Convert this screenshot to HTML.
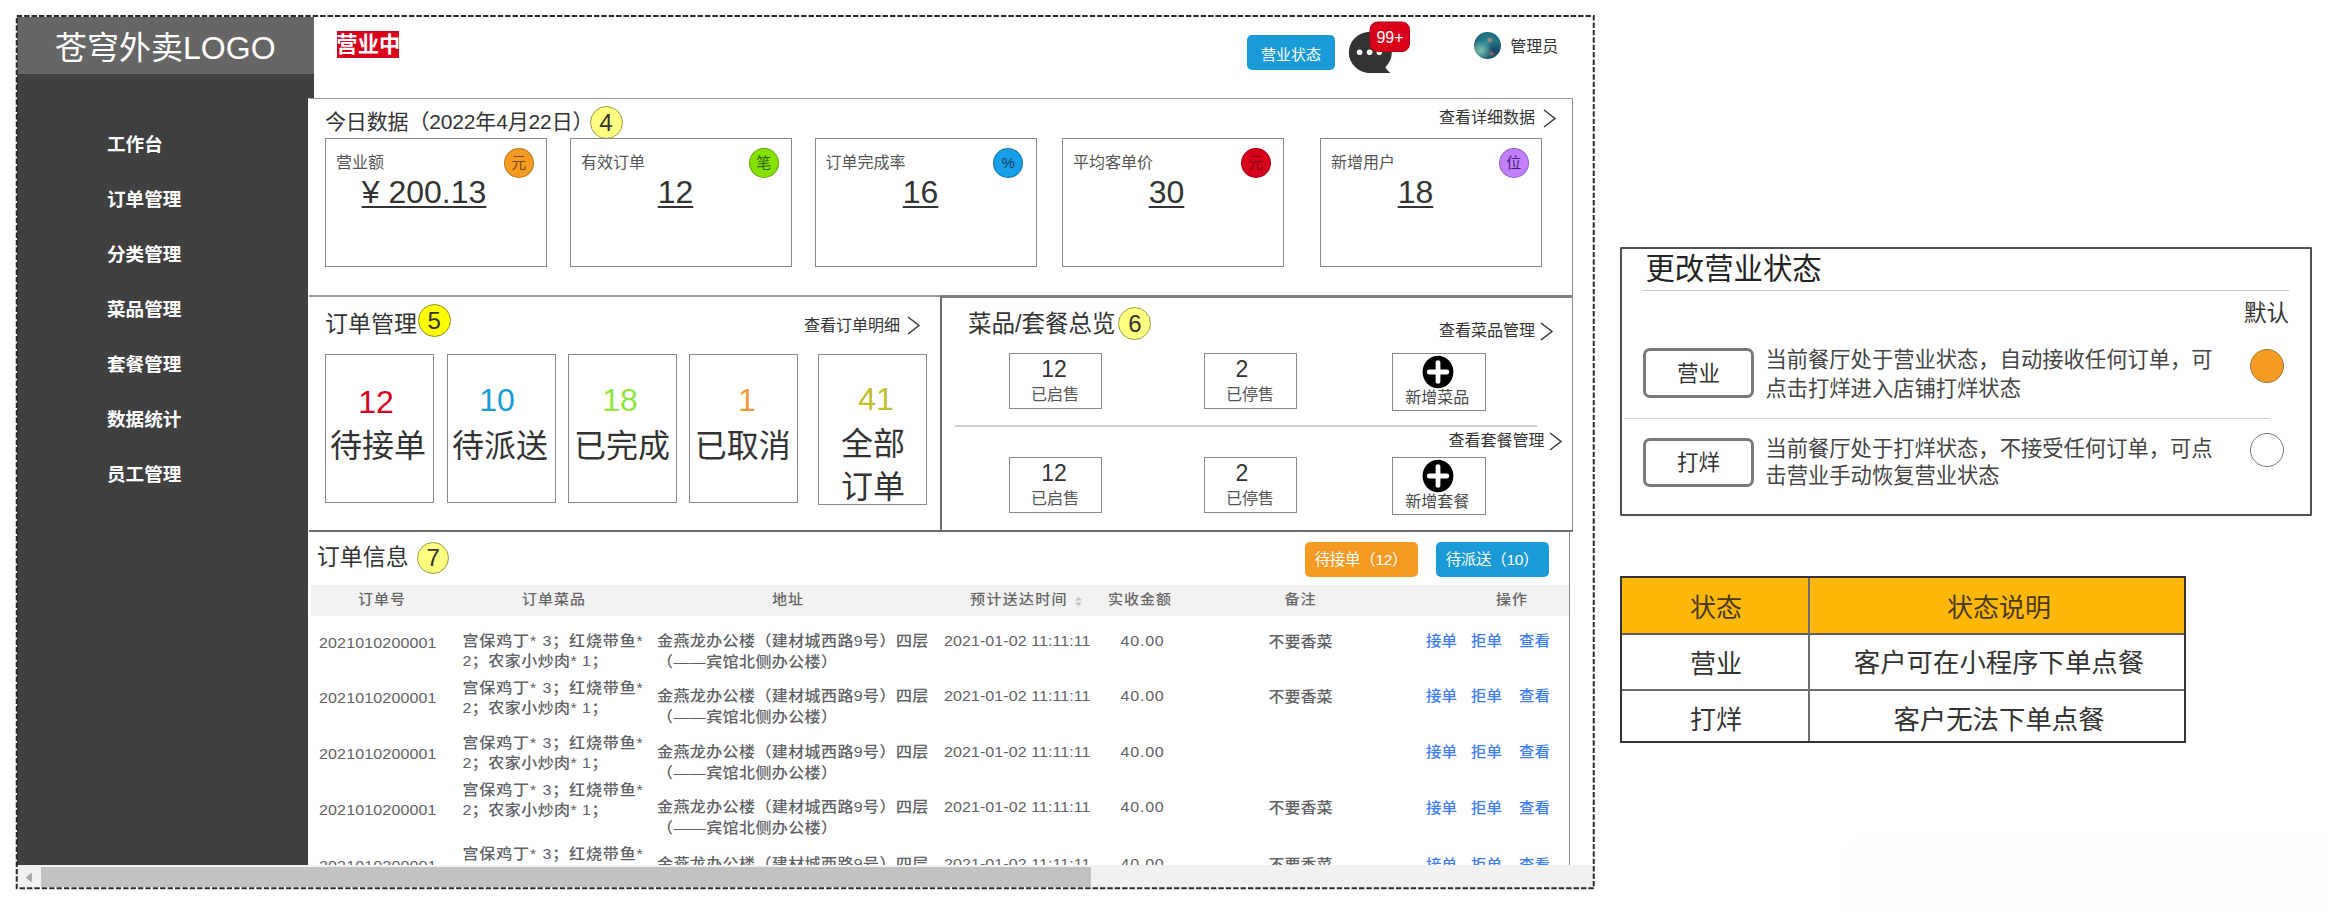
<!DOCTYPE html>
<html lang="zh-CN"><head><meta charset="utf-8"><title>苍穹外卖 工作台</title>
<style>
html,body{margin:0;padding:0;background:#fff}
body{width:2328px;height:912px;position:relative;overflow:hidden;
font-family:"Liberation Sans","Noto Sans CJK SC",sans-serif;color:#333}
body div,body svg{position:absolute;white-space:nowrap}
body div>span{position:static}
.tb div{transform:scaleY(.94)}
</style></head><body>
<div style="left:17px;top:17px;width:297px;height:57.2px;background:#666"></div>
<div style="left:-34.69999999999999px;top:26.299999999999997px;width:400px;text-align:center;font-size:32px;line-height:44px;color:#fff;font-weight:400;">苍穹外卖LOGO</div>
<div style="left:17px;top:74.1px;width:297px;height:790.6px;background:#404040"></div>
<div style="left:308px;top:98.3px;width:1265px;height:768px;background:#fff"></div>
<div style="left:107px;top:132.2px;font-size:18.6px;line-height:26px;color:#fff;font-weight:700;">工作台</div>
<div style="left:107px;top:187.2px;font-size:18.6px;line-height:26px;color:#fff;font-weight:700;">订单管理</div>
<div style="left:107px;top:242.2px;font-size:18.6px;line-height:26px;color:#fff;font-weight:700;">分类管理</div>
<div style="left:107px;top:297.2px;font-size:18.6px;line-height:26px;color:#fff;font-weight:700;">菜品管理</div>
<div style="left:107px;top:352.2px;font-size:18.6px;line-height:26px;color:#fff;font-weight:700;">套餐管理</div>
<div style="left:107px;top:407.2px;font-size:18.6px;line-height:26px;color:#fff;font-weight:700;">数据统计</div>
<div style="left:107px;top:462.2px;font-size:18.6px;line-height:26px;color:#fff;font-weight:700;">员工管理</div>
<div style="left:337px;top:31px;width:62px;height:27px;background:#d9001b"></div>
<div style="left:328.3px;top:32.1px;width:80px;text-align:center;font-size:21.3px;line-height:27px;color:#fff;font-weight:700;">营业中</div>
<div style="left:1246.7px;top:34.5px;width:88.6px;height:35.7px;background:#1a9bd7;border-radius:5px"></div>
<div style="left:1241.0px;top:43.5px;width:100px;text-align:center;font-size:15px;line-height:21px;color:#fff;font-weight:400;">营业状态</div>
<svg style="left:1340px;top:20px" width="80" height="60" viewBox="1340 20 80 60"><ellipse cx="1370.3" cy="52.4" rx="21.5" ry="20.7" fill="#333"/><path d="M1383 62 Q1385 69 1390.5 73 L1368 73.1 Z" fill="#333"/><circle cx="1359.6" cy="52.2" r="2.8" fill="#fff"/><circle cx="1369.6" cy="52.2" r="2.8" fill="#fff"/><circle cx="1379.3" cy="52.2" r="2.8" fill="#fff"/><rect x="1370" y="22" width="39.5" height="29.5" rx="7.5" fill="#d9001b" stroke="#b80018" stroke-width="1"/></svg>
<div style="left:1360.0px;top:26.700000000000003px;width:60px;text-align:center;font-size:16px;line-height:22px;color:#fff;font-weight:400;">99+</div>
<div style="left:1474.4px;top:32.2px;width:26.8px;height:26.8px;border-radius:50%;background:radial-gradient(circle at 58% 30%, #d9866f 0, rgba(217,134,111,0) 14%),radial-gradient(circle at 66% 80%, #c46a5a 0, rgba(196,106,90,0) 10%),radial-gradient(ellipse 45% 38% at 24% 68%, #7dbfae 0, rgba(125,191,174,0) 100%),radial-gradient(ellipse 40% 34% at 70% 70%, #163f63 0, rgba(22,63,99,0) 100%),radial-gradient(circle at 50% 40%, #2b8793 0, #1a6476 70%, #174f66 100%)"></div>
<div style="left:1510.3px;top:36.2px;font-size:16px;line-height:22px;color:#333;font-weight:400;">管理员</div>
<div style="left:309px;top:98px;width:1264px;height:198px;border:1px solid #969696;box-sizing:border-box;border-bottom:none;border-left:none"></div>
<div style="left:325px;top:106.7px;font-size:21px;line-height:29px;color:#333;font-weight:400;letter-spacing:-0.15px">今日数据（2022年4月22日）</div>
<div style="left:589.5px;top:106.1px;width:33.0px;height:33.0px;border-radius:50%;background:#ffff80;border:1px solid #9c9c4a;box-sizing:border-box;text-align:center;line-height:31.0px;font-size:24px;color:#333;">4</div>
<div style="left:1135px;top:107.0px;width:400px;text-align:right;font-size:16px;line-height:22px;color:#333;font-weight:400;">查看详细数据</div>
<svg style="left:1543px;top:108.5px" width="14" height="19" viewBox="0 0 14 19"><path d="M1 1 L12 9.5 L1 18" fill="none" stroke="#333" stroke-width="1.4"/></svg>
<div style="left:325px;top:138px;width:222px;height:128.7px;border:1px solid #8a8a8a;box-sizing:border-box"></div>
<div style="left:336px;top:152.0px;font-size:16px;line-height:22px;color:#555;font-weight:400;">营业额</div>
<div style="left:503.70000000000005px;top:148px;width:30px;height:30px;border-radius:50%;background:#f59a23;border:1px solid rgba(0,0,0,.25);box-sizing:border-box;text-align:center;line-height:28px;font-size:15px;color:#7a4a10;">元</div>
<div style="left:304.0px;top:175.0px;width:240px;text-align:center;font-size:32px;line-height:34px;color:#333;font-weight:400;"><span style="text-decoration:underline;text-decoration-thickness:2.4px;text-underline-offset:3.2px;text-decoration-skip-ink:none">¥ 200.13</span></div>
<div style="left:570px;top:138px;width:222px;height:128.7px;border:1px solid #8a8a8a;box-sizing:border-box"></div>
<div style="left:581px;top:152.0px;font-size:16px;line-height:22px;color:#555;font-weight:400;">有效订单</div>
<div style="left:748.7px;top:148px;width:30px;height:30px;border-radius:50%;background:#86e000;border:1px solid rgba(0,0,0,.25);box-sizing:border-box;text-align:center;line-height:28px;font-size:15px;color:#2f6a00;">笔</div>
<div style="left:555.5px;top:175.0px;width:240px;text-align:center;font-size:32px;line-height:34px;color:#333;font-weight:400;"><span style="text-decoration:underline;text-decoration-thickness:2.4px;text-underline-offset:3.2px;text-decoration-skip-ink:none">12</span></div>
<div style="left:814.5px;top:138px;width:222px;height:128.7px;border:1px solid #8a8a8a;box-sizing:border-box"></div>
<div style="left:825.5px;top:152.0px;font-size:16px;line-height:22px;color:#555;font-weight:400;">订单完成率</div>
<div style="left:993.2px;top:148px;width:30px;height:30px;border-radius:50%;background:#179ee6;border:1px solid rgba(0,0,0,.25);box-sizing:border-box;text-align:center;line-height:28px;font-size:15px;color:#0b3f66;">%</div>
<div style="left:800.5px;top:175.0px;width:240px;text-align:center;font-size:32px;line-height:34px;color:#333;font-weight:400;"><span style="text-decoration:underline;text-decoration-thickness:2.4px;text-underline-offset:3.2px;text-decoration-skip-ink:none">16</span></div>
<div style="left:1062px;top:138px;width:222px;height:128.7px;border:1px solid #8a8a8a;box-sizing:border-box"></div>
<div style="left:1073px;top:152.0px;font-size:16px;line-height:22px;color:#555;font-weight:400;">平均客单价</div>
<div style="left:1240.7px;top:148px;width:30px;height:30px;border-radius:50%;background:#d9001b;border:1px solid rgba(0,0,0,.25);box-sizing:border-box;text-align:center;line-height:28px;font-size:15px;color:#7a0010;">元</div>
<div style="left:1046.5px;top:175.0px;width:240px;text-align:center;font-size:32px;line-height:34px;color:#333;font-weight:400;"><span style="text-decoration:underline;text-decoration-thickness:2.4px;text-underline-offset:3.2px;text-decoration-skip-ink:none">30</span></div>
<div style="left:1320px;top:138px;width:222px;height:128.7px;border:1px solid #8a8a8a;box-sizing:border-box"></div>
<div style="left:1331px;top:152.0px;font-size:16px;line-height:22px;color:#555;font-weight:400;">新增用户</div>
<div style="left:1498.7px;top:148px;width:30px;height:30px;border-radius:50%;background:#c280ff;border:1px solid rgba(0,0,0,.25);box-sizing:border-box;text-align:center;line-height:28px;font-size:15px;color:#4b1f7a;">位</div>
<div style="left:1295.5px;top:175.0px;width:240px;text-align:center;font-size:32px;line-height:34px;color:#333;font-weight:400;"><span style="text-decoration:underline;text-decoration-thickness:2.4px;text-underline-offset:3.2px;text-decoration-skip-ink:none">18</span></div>
<div style="left:309px;top:295px;width:632px;height:1.5px;background:#9a9a9a"></div>
<div style="left:940px;top:295px;width:633px;height:2.6px;background:#808080"></div>
<div style="left:939.5px;top:296px;width:2.5px;height:235px;background:#6e6e6e"></div>
<div style="left:309px;top:529.5px;width:1264px;height:2px;background:#6e6e6e"></div>
<div style="left:1572px;top:99px;width:1px;height:432px;background:#8a8a8a"></div>
<div style="left:325px;top:308.0px;font-size:23px;line-height:32px;color:#333;font-weight:400;">订单管理</div>
<div style="left:417.6px;top:303.8px;width:33.0px;height:33.0px;border-radius:50%;background:#ffff00;border:1px solid #8a8a2a;box-sizing:border-box;text-align:center;line-height:31.0px;font-size:24px;color:#333;">5</div>
<div style="left:500px;top:314.5px;width:400px;text-align:right;font-size:16px;line-height:22px;color:#333;font-weight:400;">查看订单明细</div>
<svg style="left:907px;top:316.0px" width="14" height="19" viewBox="0 0 14 19"><path d="M1 1 L12 9.5 L1 18" fill="none" stroke="#333" stroke-width="1.4"/></svg>
<div style="left:325px;top:354px;width:109px;height:149px;border:1px solid #8a8a8a;box-sizing:border-box"></div>
<div style="left:326.0px;top:385.0px;width:100px;text-align:center;font-size:32px;line-height:34px;color:#d9001b;font-weight:400;">12</div>
<div style="left:318.0px;top:426.0px;width:120px;text-align:center;font-size:32px;line-height:40px;color:#333;font-weight:400;">待接单</div>
<div style="left:447px;top:354px;width:109px;height:149px;border:1px solid #8a8a8a;box-sizing:border-box"></div>
<div style="left:447.0px;top:383.0px;width:100px;text-align:center;font-size:32px;line-height:34px;color:#1a9bd7;font-weight:400;">10</div>
<div style="left:440.0px;top:426.0px;width:120px;text-align:center;font-size:32px;line-height:40px;color:#333;font-weight:400;">待派送</div>
<div style="left:567.5px;top:354px;width:109px;height:149px;border:1px solid #8a8a8a;box-sizing:border-box"></div>
<div style="left:570.0px;top:383.0px;width:100px;text-align:center;font-size:32px;line-height:34px;color:#8fe63c;font-weight:400;">18</div>
<div style="left:562.0px;top:426.0px;width:120px;text-align:center;font-size:32px;line-height:40px;color:#333;font-weight:400;">已完成</div>
<div style="left:688.5px;top:354px;width:109px;height:149px;border:1px solid #8a8a8a;box-sizing:border-box"></div>
<div style="left:697.0px;top:383.0px;width:100px;text-align:center;font-size:32px;line-height:34px;color:#f59a3c;font-weight:400;">1</div>
<div style="left:682.8px;top:426.0px;width:120px;text-align:center;font-size:32px;line-height:40px;color:#333;font-weight:400;">已取消</div>
<div style="left:818px;top:354px;width:109px;height:151px;border:1px solid #8a8a8a;box-sizing:border-box"></div>
<div style="left:826.0px;top:382.0px;width:100px;text-align:center;font-size:32px;line-height:34px;color:#bfbf30;font-weight:400;">41</div>
<div style="left:818.5px;top:424.0px;width:109px;text-align:center;font-size:32px;line-height:40px;color:#333;font-weight:400;">全部</div>
<div style="left:818.5px;top:467.0px;width:109px;text-align:center;font-size:32px;line-height:40px;color:#333;font-weight:400;">订单</div>
<div style="left:968px;top:307.5px;font-size:23.5px;line-height:33px;color:#333;font-weight:400;">菜品/套餐总览</div>
<div style="left:1118.4px;top:306.7px;width:33.0px;height:33.0px;border-radius:50%;background:#ffff80;border:1px solid #9c9c4a;box-sizing:border-box;text-align:center;line-height:31.0px;font-size:24px;color:#333;">6</div>
<div style="left:1135px;top:319.5px;width:400px;text-align:right;font-size:16px;line-height:22px;color:#333;font-weight:400;">查看菜品管理</div>
<svg style="left:1540px;top:321.5px" width="14" height="19" viewBox="0 0 14 19"><path d="M1 1 L12 9.5 L1 18" fill="none" stroke="#333" stroke-width="1.4"/></svg>
<div style="left:955px;top:425.2px;width:582px;height:2px;background:#cfcfcf"></div>
<div style="left:1144.5px;top:430.0px;width:400px;text-align:right;font-size:16px;line-height:22px;color:#333;font-weight:400;">查看套餐管理</div>
<svg style="left:1549px;top:431.5px" width="14" height="19" viewBox="0 0 14 19"><path d="M1 1 L12 9.5 L1 18" fill="none" stroke="#333" stroke-width="1.4"/></svg>
<div style="left:1009px;top:353px;width:93px;height:55.5px;border:1px solid #8a8a8a;box-sizing:border-box"></div>
<div style="left:1014.0px;top:352.5px;width:80px;text-align:center;font-size:23px;line-height:32px;color:#333;font-weight:400;">12</div>
<div style="left:1010.0px;top:383.7px;width:90px;text-align:center;font-size:16px;line-height:22px;color:#555;font-weight:400;">已启售</div>
<div style="left:1204px;top:353px;width:93px;height:55.5px;border:1px solid #8a8a8a;box-sizing:border-box"></div>
<div style="left:1202.0px;top:352.5px;width:80px;text-align:center;font-size:23px;line-height:32px;color:#333;font-weight:400;">2</div>
<div style="left:1205.0px;top:383.7px;width:90px;text-align:center;font-size:16px;line-height:22px;color:#555;font-weight:400;">已停售</div>
<div style="left:1392px;top:353px;width:94px;height:58px;border:1px solid #8a8a8a;box-sizing:border-box"></div>
<svg style="left:1420.5px;top:355px" width="34" height="34" viewBox="0 0 34 34"><ellipse cx="17" cy="17" rx="15.4" ry="16.2" fill="#000"/><path d="M17 7.6V26.4M8.2 17H25.8" stroke="#fff" stroke-width="4.8" stroke-linecap="round"/></svg>
<div style="left:1390.2px;top:387.3px;width:94px;text-align:center;font-size:16px;line-height:22px;color:#4a4a4a;font-weight:400;">新增菜品</div>
<div style="left:1009px;top:457px;width:93px;height:55.5px;border:1px solid #8a8a8a;box-sizing:border-box"></div>
<div style="left:1014.0px;top:456.5px;width:80px;text-align:center;font-size:23px;line-height:32px;color:#333;font-weight:400;">12</div>
<div style="left:1010.0px;top:487.7px;width:90px;text-align:center;font-size:16px;line-height:22px;color:#555;font-weight:400;">已启售</div>
<div style="left:1204px;top:457px;width:93px;height:55.5px;border:1px solid #8a8a8a;box-sizing:border-box"></div>
<div style="left:1202.0px;top:456.5px;width:80px;text-align:center;font-size:23px;line-height:32px;color:#333;font-weight:400;">2</div>
<div style="left:1205.0px;top:487.7px;width:90px;text-align:center;font-size:16px;line-height:22px;color:#555;font-weight:400;">已停售</div>
<div style="left:1392px;top:457px;width:94px;height:58px;border:1px solid #8a8a8a;box-sizing:border-box"></div>
<svg style="left:1420.5px;top:459px" width="34" height="34" viewBox="0 0 34 34"><ellipse cx="17" cy="17" rx="15.4" ry="16.2" fill="#000"/><path d="M17 7.6V26.4M8.2 17H25.8" stroke="#fff" stroke-width="4.8" stroke-linecap="round"/></svg>
<div style="left:1390.2px;top:491.3px;width:94px;text-align:center;font-size:16px;line-height:22px;color:#4a4a4a;font-weight:400;">新增套餐</div>
<div style="left:1569px;top:531px;width:1px;height:334px;background:#8a8a8a"></div>
<div style="left:316.8px;top:541.3px;font-size:23px;line-height:32px;color:#333;font-weight:400;">订单信息</div>
<div style="left:416.9px;top:541.8000000000001px;width:32.6px;height:32.6px;border-radius:50%;background:#ffff80;border:1px solid #9c9c4a;box-sizing:border-box;text-align:center;line-height:30.6px;font-size:24px;color:#333;">7</div>
<div style="left:1305px;top:542px;width:113px;height:34.5px;background:#f59a23;border-radius:5px"></div>
<div style="left:1296.0px;top:548.5px;width:130px;text-align:center;font-size:15.5px;line-height:22px;color:#fff;font-weight:400;letter-spacing:-0.3px">待接单（12）</div>
<div style="left:1436px;top:542px;width:113px;height:34.5px;background:#1a9bd7;border-radius:5px"></div>
<div style="left:1427.0px;top:548.5px;width:130px;text-align:center;font-size:15.5px;line-height:22px;color:#fff;font-weight:400;letter-spacing:-0.3px">待派送（10）</div>
<div style="left:311px;top:585px;width:1258px;height:31px;background:#f2f2f2"></div>
<div style="left:302.0px;top:588.1px;width:160px;text-align:center;font-size:15px;line-height:21px;color:#666;font-weight:500;letter-spacing:1px;transform:scaleY(.92)">订单号</div>
<div style="left:474.0px;top:588.1px;width:160px;text-align:center;font-size:15px;line-height:21px;color:#666;font-weight:500;letter-spacing:1px;transform:scaleY(.92)">订单菜品</div>
<div style="left:708.0px;top:588.1px;width:160px;text-align:center;font-size:15px;line-height:21px;color:#666;font-weight:500;letter-spacing:1px;transform:scaleY(.92)">地址</div>
<div style="left:1060.0px;top:588.1px;width:160px;text-align:center;font-size:15px;line-height:21px;color:#666;font-weight:500;letter-spacing:1px;transform:scaleY(.92)">实收金额</div>
<div style="left:1220.5px;top:588.1px;width:160px;text-align:center;font-size:15px;line-height:21px;color:#666;font-weight:500;letter-spacing:1px;transform:scaleY(.92)">备注</div>
<div style="left:1432.0px;top:588.1px;width:160px;text-align:center;font-size:15px;line-height:21px;color:#666;font-weight:500;letter-spacing:1px;transform:scaleY(.92)">操作</div>
<div style="left:939.0px;top:588.1px;width:160px;text-align:center;font-size:15px;line-height:21px;color:#666;font-weight:500;letter-spacing:1.3px;transform:scaleY(.92)">预计送达时间</div>
<svg style="left:1074px;top:595.5px" width="9" height="11" viewBox="0 0 9 11"><path d="M4.5 0.8 L8 4.6 H1Z M4.5 10.2 L8 6.4 H1Z" fill="#c0c4cc"/></svg>
<div class="tb" style="left:309px;top:616px;width:1260px;height:249.2px;overflow:hidden">
<div style="left:10px;top:16.0px;font-size:16px;line-height:22px;color:#606266;font-weight:500;letter-spacing:0.15px">2021010200001</div>
<div style="left:153.5px;top:13.899999999999977px;font-size:16px;line-height:22px;color:#606266;font-weight:500;letter-spacing:0.87px">宫保鸡丁* 3；红烧带鱼*</div>
<div style="left:153.5px;top:33.89999999999998px;font-size:16px;line-height:22px;color:#606266;font-weight:500;letter-spacing:0.45px">2；农家小炒肉* 1；</div>
<div style="left:348px;top:14.0px;font-size:16px;line-height:22px;color:#606266;font-weight:500;letter-spacing:0.4px">金燕龙办公楼（建材城西路9号）四层</div>
<div style="left:348px;top:34.5px;font-size:16px;line-height:22px;color:#606266;font-weight:500;letter-spacing:0.4px">（——宾馆北侧办公楼）</div>
<div style="left:635px;top:14.0px;font-size:16px;line-height:22px;color:#606266;font-weight:500;letter-spacing:0.08px">2021-01-02 11:11:11</div>
<div style="left:811.5px;top:14.0px;font-size:16px;line-height:22px;color:#606266;font-weight:500;letter-spacing:0.8px">40.00</div>
<div style="left:931.5px;top:14.5px;width:120px;text-align:center;font-size:16px;line-height:22px;color:#606266;font-weight:500;">不要香菜</div>
<div style="left:1117px;top:14.3px;font-size:15.5px;line-height:22px;color:#3d7efa;font-weight:500;">接单</div>
<div style="left:1162px;top:14.3px;font-size:15.5px;line-height:22px;color:#3d7efa;font-weight:500;">拒单</div>
<div style="left:1210px;top:14.3px;font-size:15.5px;line-height:22px;color:#3d7efa;font-weight:500;">查看</div>
<div style="left:10px;top:71.0px;font-size:16px;line-height:22px;color:#606266;font-weight:500;letter-spacing:0.15px">2021010200001</div>
<div style="left:153.5px;top:60.89999999999998px;font-size:16px;line-height:22px;color:#606266;font-weight:500;letter-spacing:0.87px">宫保鸡丁* 3；红烧带鱼*</div>
<div style="left:153.5px;top:80.89999999999998px;font-size:16px;line-height:22px;color:#606266;font-weight:500;letter-spacing:0.45px">2；农家小炒肉* 1；</div>
<div style="left:348px;top:69.0px;font-size:16px;line-height:22px;color:#606266;font-weight:500;letter-spacing:0.4px">金燕龙办公楼（建材城西路9号）四层</div>
<div style="left:348px;top:89.5px;font-size:16px;line-height:22px;color:#606266;font-weight:500;letter-spacing:0.4px">（——宾馆北侧办公楼）</div>
<div style="left:635px;top:69.0px;font-size:16px;line-height:22px;color:#606266;font-weight:500;letter-spacing:0.08px">2021-01-02 11:11:11</div>
<div style="left:811.5px;top:69.0px;font-size:16px;line-height:22px;color:#606266;font-weight:500;letter-spacing:0.8px">40.00</div>
<div style="left:931.5px;top:69.5px;width:120px;text-align:center;font-size:16px;line-height:22px;color:#606266;font-weight:500;">不要香菜</div>
<div style="left:1117px;top:69.3px;font-size:15.5px;line-height:22px;color:#3d7efa;font-weight:500;">接单</div>
<div style="left:1162px;top:69.3px;font-size:15.5px;line-height:22px;color:#3d7efa;font-weight:500;">拒单</div>
<div style="left:1210px;top:69.3px;font-size:15.5px;line-height:22px;color:#3d7efa;font-weight:500;">查看</div>
<div style="left:10px;top:127.0px;font-size:16px;line-height:22px;color:#606266;font-weight:500;letter-spacing:0.15px">2021010200001</div>
<div style="left:153.5px;top:116.39999999999998px;font-size:16px;line-height:22px;color:#606266;font-weight:500;letter-spacing:0.87px">宫保鸡丁* 3；红烧带鱼*</div>
<div style="left:153.5px;top:136.39999999999998px;font-size:16px;line-height:22px;color:#606266;font-weight:500;letter-spacing:0.45px">2；农家小炒肉* 1；</div>
<div style="left:348px;top:125.0px;font-size:16px;line-height:22px;color:#606266;font-weight:500;letter-spacing:0.4px">金燕龙办公楼（建材城西路9号）四层</div>
<div style="left:348px;top:145.5px;font-size:16px;line-height:22px;color:#606266;font-weight:500;letter-spacing:0.4px">（——宾馆北侧办公楼）</div>
<div style="left:635px;top:125.0px;font-size:16px;line-height:22px;color:#606266;font-weight:500;letter-spacing:0.08px">2021-01-02 11:11:11</div>
<div style="left:811.5px;top:125.0px;font-size:16px;line-height:22px;color:#606266;font-weight:500;letter-spacing:0.8px">40.00</div>
<div style="left:1117px;top:125.30000000000001px;font-size:15.5px;line-height:22px;color:#3d7efa;font-weight:500;">接单</div>
<div style="left:1162px;top:125.30000000000001px;font-size:15.5px;line-height:22px;color:#3d7efa;font-weight:500;">拒单</div>
<div style="left:1210px;top:125.30000000000001px;font-size:15.5px;line-height:22px;color:#3d7efa;font-weight:500;">查看</div>
<div style="left:10px;top:183.0px;font-size:16px;line-height:22px;color:#606266;font-weight:500;letter-spacing:0.15px">2021010200001</div>
<div style="left:153.5px;top:162.89999999999998px;font-size:16px;line-height:22px;color:#606266;font-weight:500;letter-spacing:0.87px">宫保鸡丁* 3；红烧带鱼*</div>
<div style="left:153.5px;top:182.89999999999998px;font-size:16px;line-height:22px;color:#606266;font-weight:500;letter-spacing:0.45px">2；农家小炒肉* 1；</div>
<div style="left:348px;top:180.29999999999995px;font-size:16px;line-height:22px;color:#606266;font-weight:500;letter-spacing:0.4px">金燕龙办公楼（建材城西路9号）四层</div>
<div style="left:348px;top:200.79999999999995px;font-size:16px;line-height:22px;color:#606266;font-weight:500;letter-spacing:0.4px">（——宾馆北侧办公楼）</div>
<div style="left:635px;top:180.29999999999995px;font-size:16px;line-height:22px;color:#606266;font-weight:500;letter-spacing:0.08px">2021-01-02 11:11:11</div>
<div style="left:811.5px;top:180.29999999999995px;font-size:16px;line-height:22px;color:#606266;font-weight:500;letter-spacing:0.8px">40.00</div>
<div style="left:931.5px;top:180.79999999999995px;width:120px;text-align:center;font-size:16px;line-height:22px;color:#606266;font-weight:500;">不要香菜</div>
<div style="left:1117px;top:180.59999999999997px;font-size:15.5px;line-height:22px;color:#3d7efa;font-weight:500;">接单</div>
<div style="left:1162px;top:180.59999999999997px;font-size:15.5px;line-height:22px;color:#3d7efa;font-weight:500;">拒单</div>
<div style="left:1210px;top:180.59999999999997px;font-size:15.5px;line-height:22px;color:#3d7efa;font-weight:500;">查看</div>
<div style="left:10px;top:238.5px;font-size:16px;line-height:22px;color:#606266;font-weight:500;letter-spacing:0.15px">2021010200001</div>
<div style="left:153.5px;top:226.89999999999998px;font-size:16px;line-height:22px;color:#606266;font-weight:500;letter-spacing:0.87px">宫保鸡丁* 3；红烧带鱼*</div>
<div style="left:153.5px;top:246.89999999999998px;font-size:16px;line-height:22px;color:#606266;font-weight:500;letter-spacing:0.45px">2；农家小炒肉* 1；</div>
<div style="left:348px;top:237.39999999999998px;font-size:16px;line-height:22px;color:#606266;font-weight:500;letter-spacing:0.4px">金燕龙办公楼（建材城西路9号）四层</div>
<div style="left:348px;top:257.9px;font-size:16px;line-height:22px;color:#606266;font-weight:500;letter-spacing:0.4px">（——宾馆北侧办公楼）</div>
<div style="left:635px;top:237.39999999999998px;font-size:16px;line-height:22px;color:#606266;font-weight:500;letter-spacing:0.08px">2021-01-02 11:11:11</div>
<div style="left:811.5px;top:237.39999999999998px;font-size:16px;line-height:22px;color:#606266;font-weight:500;letter-spacing:0.8px">40.00</div>
<div style="left:931.5px;top:237.89999999999998px;width:120px;text-align:center;font-size:16px;line-height:22px;color:#606266;font-weight:500;">不要香菜</div>
<div style="left:1117px;top:237.7px;font-size:15.5px;line-height:22px;color:#3d7efa;font-weight:500;">接单</div>
<div style="left:1162px;top:237.7px;font-size:15.5px;line-height:22px;color:#3d7efa;font-weight:500;">拒单</div>
<div style="left:1210px;top:237.7px;font-size:15.5px;line-height:22px;color:#3d7efa;font-weight:500;">查看</div>
</div>
<div style="left:17.3px;top:865.2px;width:1575.5px;height:22.3px;background:#f1f1f1"></div>
<div style="left:41.2px;top:866.7px;width:1049.6px;height:20.8px;background:#c2c2c2"></div>
<svg style="left:24px;top:870.5px" width="10" height="13" viewBox="0 0 10 13"><path d="M7.8 1.6 L1.8 6.5 L7.8 11.4Z" fill="#a3a3a3"/></svg>
<div style="left:1842px;top:834px;width:486px;height:78px;background:linear-gradient(90deg,#fefefe,#fdfdfd);border-radius:30px 0 0 0"></div>
<div style="left:1619.5px;top:247px;width:692px;height:268.7px;border:2px solid #505050;border-radius:1px;box-sizing:border-box"></div>
<div style="left:1645.4px;top:249.39999999999998px;font-size:29.4px;line-height:40px;color:#222;font-weight:400;">更改营业状态</div>
<div style="left:1642.5px;top:290px;width:646px;height:1.3px;background:#c8c8c8"></div>
<div style="left:1889px;top:297.5px;width:400px;text-align:right;font-size:22.5px;line-height:31px;color:#333;font-weight:400;">默认</div>
<div style="left:1623.5px;top:417.5px;width:646px;height:1.3px;background:#d0d0d0"></div>
<div style="left:1643px;top:348px;width:111px;height:49.5px;border:3px solid #7a7a7a;border-radius:7px;box-sizing:border-box"></div>
<div style="left:1648.5px;top:358.5px;width:100px;text-align:center;font-size:21.5px;line-height:30px;color:#333;font-weight:400;">营业</div>
<div style="left:1765.4px;top:345.2px;font-size:21.3px;line-height:30px;color:#444;font-weight:400;">当前餐厅处于营业状态，自动接收任何订单，可</div>
<div style="left:1765.4px;top:373.5px;font-size:21.3px;line-height:30px;color:#444;font-weight:400;">点击打烊进入店铺打烊状态</div>
<div style="left:2249.7px;top:349px;width:34px;height:34px;border-radius:50%;background:#f59a23;border:1px solid #9a7a45;box-sizing:border-box;text-align:center;line-height:32px;font-size:14px;color:#333;"></div>
<div style="left:1643px;top:437.5px;width:111px;height:49.5px;border:3px solid #7a7a7a;border-radius:7px;box-sizing:border-box"></div>
<div style="left:1648.5px;top:448.0px;width:100px;text-align:center;font-size:21.5px;line-height:30px;color:#333;font-weight:400;">打烊</div>
<div style="left:1765.4px;top:433.6px;font-size:21.3px;line-height:30px;color:#444;font-weight:400;">当前餐厅处于打烊状态，不接受任何订单，可点</div>
<div style="left:1765.4px;top:461.3px;font-size:21.3px;line-height:30px;color:#444;font-weight:400;">击营业手动恢复营业状态</div>
<div style="left:2249.7px;top:432.5px;width:34px;height:34px;border-radius:50%;background:#fff;border:1px solid #7a7a7a;box-sizing:border-box;text-align:center;line-height:32px;font-size:14px;color:#333;"></div>
<div style="left:1619.5px;top:575.5px;width:566px;height:167px;border:2px solid #333;box-sizing:border-box;background:#fff"></div>
<div style="left:1621.5px;top:577.5px;width:562px;height:56px;background:#ffb70a"></div>
<div style="left:1621.5px;top:632.8px;width:562px;height:2px;background:#5e5e5e"></div>
<div style="left:1621.5px;top:689.3px;width:562px;height:2px;background:#6e6e6e"></div>
<div style="left:1807.9px;top:577.5px;width:1.8px;height:163px;background:#6e6e6e"></div>
<div style="left:1626.0px;top:589.6px;width:180px;text-align:center;font-size:26px;line-height:36px;color:#4a3a10;font-weight:400;">状态</div>
<div style="left:1819.0px;top:589.6px;width:360px;text-align:center;font-size:26px;line-height:36px;color:#4a3a10;font-weight:400;">状态说明</div>
<div style="left:1626.0px;top:645.6px;width:180px;text-align:center;font-size:26px;line-height:36px;color:#333;font-weight:400;">营业</div>
<div style="left:1814.0px;top:645.1px;width:370px;text-align:center;font-size:26.4px;line-height:37px;color:#333;font-weight:400;">客户可在小程序下单点餐</div>
<div style="left:1626.0px;top:702.1px;width:180px;text-align:center;font-size:26px;line-height:36px;color:#333;font-weight:400;">打烊</div>
<div style="left:1814.0px;top:701.6px;width:370px;text-align:center;font-size:26.4px;line-height:37px;color:#333;font-weight:400;">客户无法下单点餐</div>
<svg style="left:0;top:0" width="1620" height="912"><rect x="16.75" y="15.9" width="1577" height="872.4" fill="none" stroke="#2b2b2b" stroke-width="2" stroke-dasharray="5.4 2"/></svg>
</body></html>
